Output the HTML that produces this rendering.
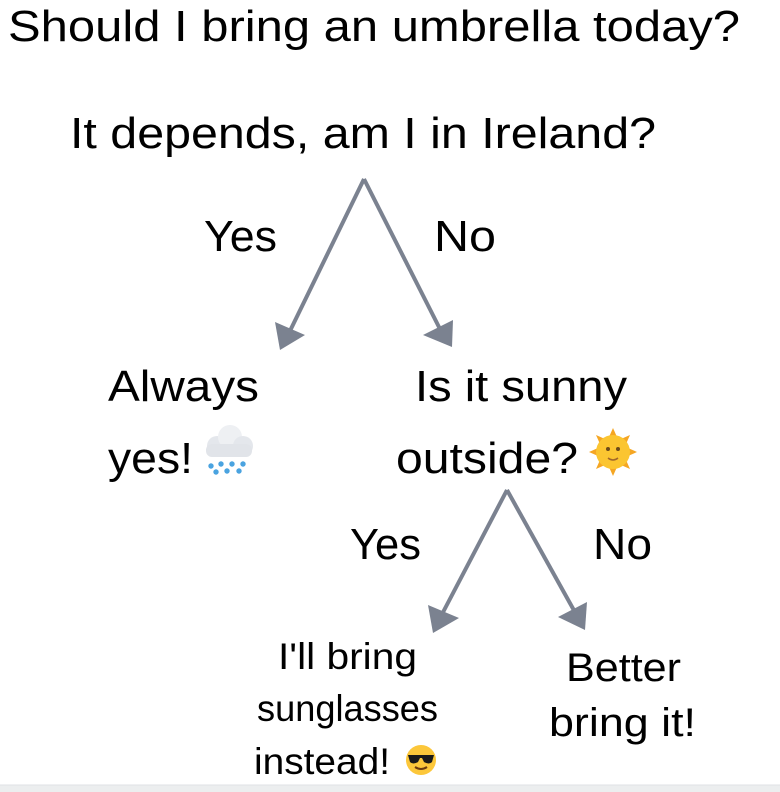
<!DOCTYPE html>
<html><head><meta charset="utf-8"><style>
html,body{margin:0;padding:0;background:#fff;width:780px;height:792px;overflow:hidden}
svg{display:block}
text{font-family:"Liberation Sans",sans-serif;fill:#000}
</style></head><body>
<svg width="780" height="792" viewBox="0 0 780 792">
<rect x="0" y="785" width="780" height="7" fill="#eceeef"/>
<line x1="0" y1="785" x2="780" y2="785" stroke="#dfe2e4"/>
<text x="8" y="41" font-size="44" textLength="732" lengthAdjust="spacingAndGlyphs">Should I bring an umbrella today?</text>
<text x="70" y="148" font-size="44" textLength="586" lengthAdjust="spacingAndGlyphs">It depends, am I in Ireland?</text>
<text x="204" y="251" font-size="44" textLength="73" lengthAdjust="spacingAndGlyphs">Yes</text>
<text x="434" y="251" font-size="44" textLength="62" lengthAdjust="spacingAndGlyphs">No</text>
<g stroke="#7b8290" stroke-width="4" fill="none">
<line x1="364" y1="179" x2="288" y2="335"/>
<line x1="364" y1="179" x2="442" y2="333"/>
<line x1="507" y1="490" x2="440" y2="618"/>
<line x1="507" y1="490" x2="576" y2="614"/>
</g>
<g fill="#7b8290">
<polygon points="275,322 305,335 280,350"/>
<polygon points="423,335 453,320 452,347"/>
<polygon points="428,605 459,618 433,633"/>
<polygon points="558,617 587,602 585,630"/>
</g>
<text x="108" y="401" font-size="44" textLength="151" lengthAdjust="spacingAndGlyphs">Always</text>
<text x="108" y="473" font-size="44" textLength="85" lengthAdjust="spacingAndGlyphs">yes!</text>
<text x="415" y="401" font-size="44" textLength="212" lengthAdjust="spacingAndGlyphs">Is it sunny</text>
<text x="396" y="473" font-size="44" textLength="182" lengthAdjust="spacingAndGlyphs">outside?</text>
<text x="350" y="559" font-size="44" textLength="71" lengthAdjust="spacingAndGlyphs">Yes</text>
<text x="593" y="559" font-size="44" textLength="59" lengthAdjust="spacingAndGlyphs">No</text>
<text x="278" y="669" font-size="37" textLength="139" lengthAdjust="spacingAndGlyphs">I'll bring</text>
<text x="257" y="721" font-size="37" textLength="181" lengthAdjust="spacingAndGlyphs">sunglasses</text>
<text x="254" y="774" font-size="37" textLength="136" lengthAdjust="spacingAndGlyphs">instead!</text>
<text x="566" y="681" font-size="40" textLength="115" lengthAdjust="spacingAndGlyphs">Better</text>
<text x="549" y="736" font-size="40" textLength="147" lengthAdjust="spacingAndGlyphs">bring it!</text>
<g>
<circle cx="217" cy="446" r="10" fill="#e4e7ec"/>
<circle cx="230" cy="437" r="12" fill="#eef0f3"/>
<circle cx="243" cy="446" r="10" fill="#e4e7ec"/>
<rect x="206" y="444" width="46" height="13" rx="6" fill="#e1e4e9"/>
<g fill="#4aa3e0">
<circle cx="211" cy="466" r="2.7"/><circle cx="221" cy="464" r="2.7"/><circle cx="232" cy="464" r="2.7"/><circle cx="243" cy="464" r="2.7"/>
<circle cx="216" cy="472" r="2.7"/><circle cx="227" cy="471" r="2.7"/><circle cx="239" cy="471" r="2.7"/>
</g>
</g>
<g transform="translate(613,452)">
<g fill="#f5a623">
<polygon points="0,-24 4,-15 -4,-15"/><polygon points="0,24 4,15 -4,15"/>
<polygon points="-24,0 -15,4 -15,-4"/><polygon points="24,0 15,4 15,-4"/>
<polygon points="17,-17 8,-13 13,-8"/><polygon points="-17,-17 -8,-13 -13,-8"/>
<polygon points="17,17 8,13 13,8"/><polygon points="-17,17 -8,13 -13,8"/>
</g>
<circle r="17" fill="#fbc531"/>
<circle cx="-5" cy="-3" r="2" fill="#6b4a1a"/><circle cx="5" cy="-3" r="2" fill="#6b4a1a"/>
<path d="M-5,6 Q0,10 5,6" stroke="#a0662a" stroke-width="1.5" fill="none"/>
</g>
<g transform="translate(421,760)">
<circle r="15" fill="#fcc73a"/>
<path d="M-13,-5 H13 L11,2 Q8,5 3,2 L1,-2 H-1 L-3,2 Q-8,5 -11,2 Z" fill="#1a1a1a"/>
<path d="M-6,7 Q0,11 6,7" stroke="#6b3b10" stroke-width="2" fill="none"/>
</g>
</svg>
</body></html>
